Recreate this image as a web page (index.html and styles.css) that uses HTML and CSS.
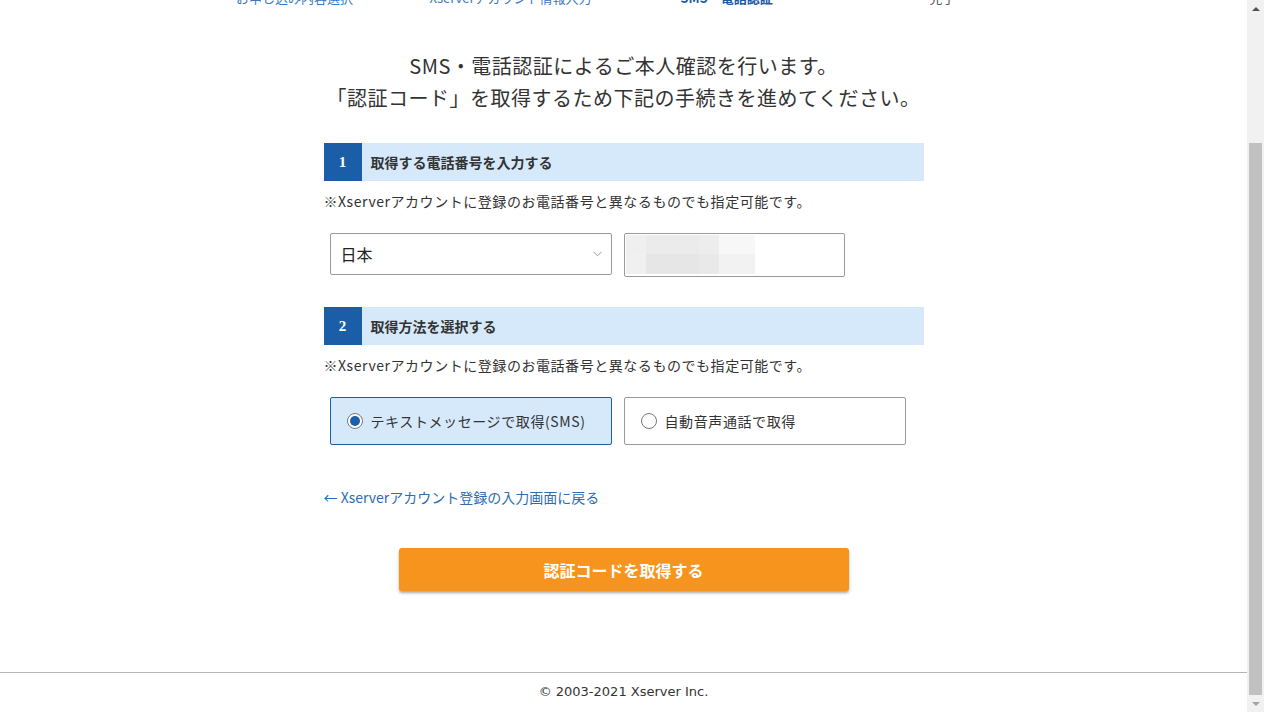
FILE: index.html
```html
<!DOCTYPE html>
<html lang="ja">
<head>
<meta charset="utf-8">
<title>SMS・電話認証 | Xserverアカウント</title>
<link rel="stylesheet" href="styles.css">
</head>
<body>
<div class="window">
  <div class="viewport">
    <div class="doc">
      <header class="site-header">
        <div class="logo">Xserverアカウント</div>
        <ol class="steps">
          <li class="step done"><span class="dot"></span><span class="label">お申し込み内容選択</span></li>
          <li class="step done"><span class="dot"></span><span class="label">Xserverアカウント情報入力</span></li>
          <li class="step current"><span class="dot"></span><span class="label">SMS・電話認証</span></li>
          <li class="step"><span class="dot"></span><span class="label">完了</span></li>
        </ol>
      </header>

      <main class="content">
        <p class="lead">SMS・電話認証によるご本人確認を行います。<br>「認証コード」を取得するため下記の手続きを進めてください。</p>

        <section class="block">
          <h2 class="block-title"><span class="num">1</span><span class="title-text">取得する電話番号を入力する</span></h2>
          <p class="note">※Xserverアカウントに登録のお電話番号と異なるものでも指定可能です。</p>
          <div class="field-row">
            <div class="select">
              <span>日本</span>
              <svg class="chev" width="9" height="6" viewBox="0 0 9 6"><path d="M0.5 0.8 L4.5 4.8 L8.5 0.8" fill="none" stroke="#9a9a9a" stroke-width="1"/></svg>
            </div>
            <div class="tel-input">
              <div class="masked">
                <span class="m m1"></span><span class="m m2"></span><span class="m m3"></span><span class="m m4"></span>
                <span class="m m5"></span><span class="m m6"></span><span class="m m7"></span><span class="m m8"></span>
              </div>
            </div>
          </div>
        </section>

        <section class="block">
          <h2 class="block-title"><span class="num">2</span><span class="title-text">取得方法を選択する</span></h2>
          <p class="note">※Xserverアカウントに登録のお電話番号と異なるものでも指定可能です。</p>
          <div class="options">
            <label class="option selected"><span class="radio checked"></span><span>テキストメッセージで取得(SMS)</span></label>
            <label class="option"><span class="radio"></span><span>自動音声通話で取得</span></label>
          </div>
        </section>

        <a class="back-link" href="#">← Xserverアカウント登録の入力画面に戻る</a>

        <button class="submit" type="button">認証コードを取得する</button>
      </main>

      <footer class="footer">© 2003-2021 Xserver Inc.</footer>
    </div>
  </div>

  <div class="scrollbar">
    <div class="sb-btn"><span class="tri-up"></span></div>
    <div class="sb-track"><div class="sb-thumb"></div></div>
    <div class="sb-btn"><span class="tri-down"></span></div>
  </div>
</div>
</body>
</html>
```

FILE: styles.css
```css
html, body {
  margin: 0;
  padding: 0;
  background: #fff;
}

body {
  font-family: "Noto Sans CJK JP", "Noto Sans", sans-serif;
  color: #333;
}

.window {
  display: flex;
  width: 1264px;
  height: 712px;
  overflow: hidden;
}

.viewport {
  flex: 1;
  height: 712px;
  overflow: hidden;
  display: flex;
  flex-direction: column;
  justify-content: flex-end;
}

.doc {
  flex-shrink: 0;
  display: flex;
  flex-direction: column;
}

/* header (mostly scrolled out of view) */
.site-header {
  padding-top: 30px;
}

.logo {
  width: 900px;
  margin: 0 auto 40px;
  font-size: 22px;
  font-weight: bold;
  color: #1b5ea7;
}

.steps {
  list-style: none;
  margin: 0 auto;
  padding: 0 10px 0 0;
  width: 864px;
  display: grid;
  grid-template-columns: repeat(4, 1fr);
}

.step {
  display: flex;
  flex-direction: column;
  align-items: center;
  gap: 8px;
}

.dot {
  width: 14px;
  height: 14px;
  border-radius: 50%;
  background: #c9d9ec;
}

.step.done .dot,
.step.current .dot {
  background: #1b5ea7;
}

.label {
  font-size: 13px;
  line-height: 20px;
  color: #555;
}

.step.done .label {
  color: #3b78c0;
}

.step.current .label {
  color: #1d5aa6;
  font-weight: bold;
}

/* main */
.content {
  width: 600px;
  margin: 0 auto;
  padding-bottom: 81px;
}

.lead {
  margin: 42px 0 29px;
  font-size: 20px;
  line-height: 32px;
  letter-spacing: 0.5px;
  text-align: center;
  color: #333;
}

.block-title {
  display: flex;
  height: 38px;
  margin: 0;
  background: #d6e9fb;
  font-size: 14px;
  font-weight: bold;
}

.num {
  width: 38px;
  flex-shrink: 0;
  display: flex;
  align-items: center;
  justify-content: center;
  background: #1b5ea7;
  color: #fff;
  font-family: "Liberation Serif", serif;
  font-size: 15px;
  font-weight: bold;
}

.title-text {
  align-self: center;
  padding-left: 9px;
  color: #333;
}

.note {
  margin: 10px 0 22px;
  font-size: 14px;
  line-height: 20px;
  letter-spacing: 0.55px;
  color: #333;
}

.field-row {
  display: flex;
  align-items: flex-start;
  gap: 12px;
  padding-left: 6px;
  margin-bottom: 30px;
}

.select {
  box-sizing: border-box;
  width: 282px;
  height: 42px;
  border: 1px solid #9a9a9a;
  border-radius: 2px;
  display: flex;
  align-items: center;
  justify-content: space-between;
  padding: 0 9px 0 10px;
  font-size: 16px;
  color: #222;
}

.tel-input {
  box-sizing: border-box;
  width: 221px;
  height: 44px;
  border: 1px solid #9a9a9a;
  border-radius: 2px;
  padding: 1px;
}

.masked {
  width: 129px;
  height: 39px;
  display: grid;
  grid-template-columns: 20px 53px 20px 36px;
  grid-template-rows: 19px 20px;
}

.m1 { background: #efefef; }
.m2 { background: #ebebeb; }
.m3 { background: #ededed; }
.m4 { background: #f7f7f7; }
.m5 { background: #f0f0f0; }
.m6 { background: #e6e6e6; }
.m7 { background: #e9e9e9; }
.m8 { background: #f2f2f2; }

.options {
  display: flex;
  gap: 12px;
  padding-left: 6px;
  margin-bottom: 42px;
}

.option {
  box-sizing: border-box;
  width: 282px;
  height: 48px;
  border: 1px solid #9a9a9a;
  border-radius: 2px;
  display: flex;
  align-items: center;
  gap: 8px;
  padding-left: 16px;
  font-size: 14px;
  letter-spacing: 0.6px;
  color: #333;
  background: #fff;
}

.option.selected {
  background: #d6e9fb;
  border-color: #1b5ea7;
}

.radio {
  box-sizing: border-box;
  width: 16px;
  height: 16px;
  border: 1px solid #777;
  border-radius: 50%;
  background: #fff;
  display: flex;
  align-items: center;
  justify-content: center;
}

.radio.checked::after {
  content: "";
  width: 10px;
  height: 10px;
  border-radius: 50%;
  background: #1a5fa8;
}

.back-link {
  display: block;
  font-size: 14px;
  line-height: 20px;
  color: #2d6cb5;
  text-decoration: none;
}

.submit {
  display: block;
  width: 450px;
  height: 43px;
  margin: 41px auto 0;
  border: none;
  border-radius: 3px;
  background: #f7941e;
  color: #fff;
  font-family: "Noto Sans CJK JP", sans-serif;
  font-size: 16px;
  font-weight: bold;
  box-shadow: 0 2px 3px rgba(0, 0, 0, 0.35);
}

.footer {
  border-top: 1px solid #b4b4b4;
  padding: 10px 0 11px;
  text-align: center;
  font-family: "DejaVu Sans", sans-serif;
  font-size: 13px;
  line-height: 18px;
  color: #333;
}

/* scrollbar */
.scrollbar {
  width: 17px;
  flex-shrink: 0;
  background: #f1f1f1;
  display: flex;
  flex-direction: column;
}

.sb-btn {
  height: 17px;
  display: flex;
  align-items: center;
  justify-content: center;
}

.tri-up {
  width: 0;
  height: 0;
  border-left: 4px solid transparent;
  border-right: 4px solid transparent;
  border-bottom: 4px solid #505050;
}

.tri-down {
  width: 0;
  height: 0;
  border-left: 4px solid transparent;
  border-right: 4px solid transparent;
  border-top: 4px solid #a3a3a3;
}

.sb-track {
  flex: 1;
  display: flex;
  flex-direction: column;
  justify-content: flex-end;
  padding: 0 2px;
}

.sb-thumb {
  height: 552px;
  background: #c1c1c1;
}
```
